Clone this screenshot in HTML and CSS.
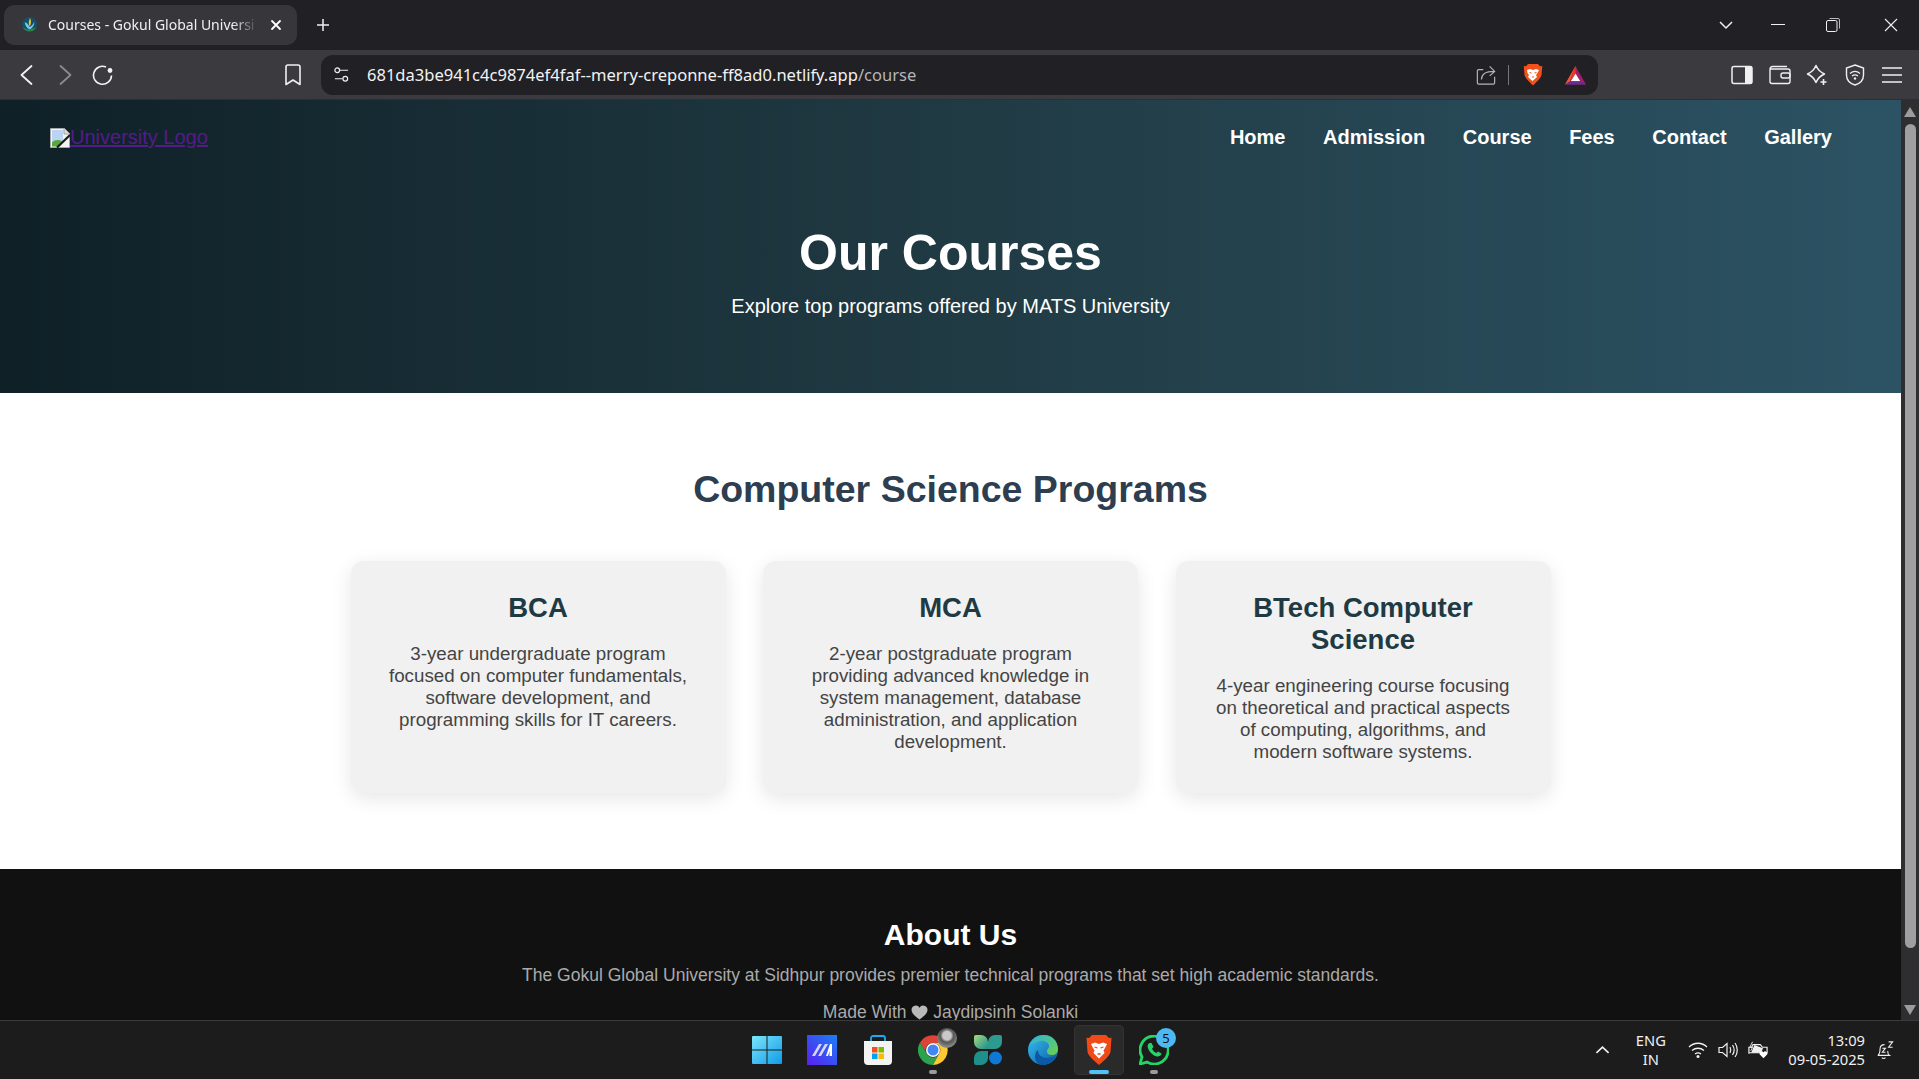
FILE: index.html
```html
<!DOCTYPE html>
<html lang="en">
<head>
  <meta charset="UTF-8">
  <meta name="viewport" content="width=device-width, initial-scale=1.0">
  <title>Courses - Gokul Global University</title>
  <link rel="stylesheet" href="styles.css">
</head>
<body>
  <!-- browser tab strip -->
  <div class="tabstrip">
    <div class="tab">
      <svg class="favicon" viewBox="0 0 16 16"><circle cx="8" cy="7" r="7" fill="#14506b"/><path d="M1.5 9.500c3 3 9 3 13 0-2 3.500-4 4-6.500 4s-4.500-.5-6.500-4z" fill="#2a8a4a"/><path d="M8.500 1c1.500 3 1 6-.5 8-1-3-1-5 .5-8z" fill="#e8c52e"/><path d="M3.500 5c2 .5 3.500 2 4.500 4.500 2-1 3.500-2.500 4.500-5 0 4-2 6.500-4.500 7C6 11 4 9 3.500 5z" fill="#7cc6e8"/></svg>
      <span class="tab-title">Courses - Gokul Global Universi</span>
      <svg class="tab-close" viewBox="0 0 12 12"><path d="M2 2l8 8M10 2l-8 8" stroke="#fff" stroke-width="1.8" stroke-linecap="round"/></svg>
    </div>
    <svg class="new-tab" viewBox="0 0 14 14"><path d="M7 1v12M1 7h12" stroke="#f0f0f0" stroke-width="1.5"/></svg>
    <div class="window-btns">
      <svg class="win-btn win-chev" viewBox="0 0 14 14"><path d="M1 4l6 6 6-6" fill="none" stroke="#f0f0f0" stroke-width="1.5"/></svg>
      <svg class="win-btn" viewBox="0 0 14 14"><path d="M0 6.500h14" stroke="#f0f0f0" stroke-width="1"/></svg>
      <svg class="win-btn" viewBox="0 0 14 14"><rect x=".5" y="2.500" width="10.500" height="11" rx="1.5" fill="none" stroke="#f0f0f0"/><path d="M3.500 .5h8.500a1.500 1.500 0 0 1 1.500 1.500v8.500" fill="none" stroke="#bbb"/></svg>
      <svg class="win-btn win-close" viewBox="0 0 14 14"><path d="M1 1l12 12M13 1L1 13" stroke="#f0f0f0" stroke-width="1.1"/></svg>
    </div>
  </div>

  <!-- browser toolbar -->
  <div class="toolbar">
    <svg class="tool-btn" viewBox="0 0 22 22"><path d="M15.500 2L5.500 11l10 9" fill="none" stroke="#f2f2f2" stroke-width="1.8" stroke-linecap="round" stroke-linejoin="round"/></svg>
    <svg class="tool-btn" viewBox="0 0 22 22"><path d="M6.500 2l10 9-10 9" fill="none" stroke="#8b8b8e" stroke-width="1.8" stroke-linecap="round" stroke-linejoin="round"/></svg>
    <svg class="tool-btn" viewBox="0 0 22 22"><path d="M19.500 11.500A9 9 0 1 1 14 3" fill="none" stroke="#f2f2f2" stroke-width="1.6"/><circle cx="18" cy="6.500" r="2.400" fill="#f2f2f2"/></svg>
    <svg class="bookmark" viewBox="0 0 16 22"><path d="M1 3a2 2 0 0 1 2-2h10a2 2 0 0 1 2 2v17.500L8 16l-7 4.500z" fill="none" stroke="#f0f0f0" stroke-width="1.6" stroke-linejoin="round"/></svg>
    <div class="urlbar">
      <svg class="site-settings" viewBox="0 0 18 18"><circle cx="4.500" cy="4.500" r="2.500" fill="none" stroke="#eee" stroke-width="1.3"/><path d="M7 4.500h9M2 13.500h8" stroke="#eee" stroke-width="1.3"/><circle cx="13" cy="13.500" r="2.500" fill="none" stroke="#eee" stroke-width="1.3"/></svg>
      <span class="url">681da3be941c4c9874ef4faf--merry-creponne-ff8ad0.netlify.app<span class="url-path">/course</span></span>
      <svg class="share" viewBox="0 0 22 22"><path d="M8 5H3a1.500 1.500 0 0 0-1.500 1.500v13A1.500 1.500 0 0 0 3 21h16a1.500 1.500 0 0 0 1.500-1.500V13" fill="none" stroke="#b5b5b8" stroke-width="1.3"/><path d="M6 16c0-6 4-9 14-9M15 1.500L20.500 7 15 12" fill="none" stroke="#b5b5b8" stroke-width="1.3"/></svg>
      <span class="url-sep"></span>
      <svg class="brave-small" viewBox="0 0 20 23"><path d="M5 1h10l2 2.200 2.300-.2L18.500 12c-.5 3-6 8-8.500 10.500C7.500 20 2 15 1.500 12L.7 3 3 3.200z" fill="#f1511b"/><path d="M4 7l3-1 3 1 3-1 3 1-1.500 3-1.500 2 1 2-4.500 4-4.500-4 1-2-1.500-2z" fill="#fff"/><path d="M6.500 9.500l2 .5M13.500 9.500l-2 .5M9 14h2" stroke="#f1511b" stroke-width="1"/></svg>
      <svg class="bat" viewBox="0 0 24 21"><path d="M12 1L1 20.500h22z" fill="#9e1f63"/><path d="M12 1L1 20.500l5-3.500z" fill="#f15a24"/><path d="M12 9l-5 8h10z" fill="#fff"/><path d="M1 20.500L7 17h10l6 3.500z" fill="#662d91"/><path d="M12 1L6.500 17 12 9z" fill="#ee3a24"/></svg>
    </div>
    <div class="tool-right">
      <svg class="tool-btn" viewBox="0 0 22 20"><rect x="1" y="1.500" width="20" height="17" rx="2" fill="none" stroke="#f0f0f0" stroke-width="1.5"/><rect x="14" y="1.500" width="7" height="17" fill="#f0f0f0"/></svg>
      <svg class="tool-btn" viewBox="0 0 22 20"><path d="M3.500 1.500H18M1 4a2.500 2.500 0 0 1 2.500-2.500M1 4v12.500a2 2 0 0 0 2 2h16a2 2 0 0 0 2-2V6a2 2 0 0 0-2-2H1" fill="none" stroke="#f0f0f0" stroke-width="1.4"/><rect x="12" y="8" width="9" height="5" rx="2" fill="none" stroke="#f0f0f0" stroke-width="1.4"/></svg>
      <svg class="tool-btn" viewBox="0 0 22 22"><path d="M10 1.500Q12.500 7.500 18.500 10 12.500 12.500 10 18.500 7.500 12.500 1.500 10 7.500 7.500 10 1.500z" fill="none" stroke="#f0f0f0" stroke-width="1.5" stroke-linejoin="round"/><path d="M17.500 15v6M14.500 18h6" stroke="#f0f0f0" stroke-width="1.6"/></svg>
      <svg class="tool-btn" viewBox="0 0 20 22"><path d="M10 1l8.500 3v7c0 5-3.500 8.500-8.500 10C5 19.500 1.500 16 1.500 11V4z" fill="none" stroke="#f0f0f0" stroke-width="1.4"/><path d="M5 9.500c3-2.500 7-2.500 10 0M7 12c2-1.500 4-1.500 6 0" fill="none" stroke="#f0f0f0" stroke-width="1.3"/><circle cx="10" cy="14.500" r="1.200" fill="#f0f0f0"/></svg>
      <svg class="tool-btn" viewBox="0 0 22 18"><path d="M1 2h20M1 9h20M1 16h20" stroke="#f0f0f0" stroke-width="1.5"/></svg>
    </div>
  </div>

  <div class="viewport">
    <div class="page">
      <header class="hero">
        <nav class="nav">
          <a class="logo" href="#">
            <svg class="broken-img" viewBox="0 0 20 20"><path d="M.5 .5h14l5 5v14H.5z" fill="#f4f4f4" stroke="#a6a6a6"/><path d="M14 .5v5.500h5.500" fill="#ddd" stroke="#a6a6a6"/><path d="M2 2h11v12H2z" fill="#bcd4f4"/><path d="M2 18.500v-4c3-3 7-3 10-1l-3 5z" fill="#58a83a"/><path d="M7 19.500L20 7" stroke="#1c1c1c" stroke-width="2.2"/></svg>University Logo
          </a>
          <ul class="nav-links">
            <li>Home</li>
            <li>Admission</li>
            <li>Course</li>
            <li>Fees</li>
            <li>Contact</li>
            <li>Gallery</li>
          </ul>
        </nav>
        <h1>Our Courses</h1>
        <p class="hero-sub">Explore top programs offered by MATS University</p>
      </header>

      <section class="programs">
        <h2>Computer Science Programs</h2>
        <div class="card-grid">
          <div class="card">
            <h3>BCA</h3>
            <p>3-year undergraduate program focused on computer fundamentals, software development, and programming skills for IT careers.</p>
          </div>
          <div class="card">
            <h3>MCA</h3>
            <p>2-year postgraduate program providing advanced knowledge in system management, database administration, and application development.</p>
          </div>
          <div class="card">
            <h3>BTech Computer Science</h3>
            <p>4-year engineering course focusing on theoretical and practical aspects of computing, algorithms, and modern software systems.</p>
          </div>
        </div>
      </section>

      <footer class="footer">
        <h3>About Us</h3>
        <p>The Gokul Global University at Sidhpur provides premier technical programs that set high academic standards.</p>
        <p class="made">Made With <svg class="heart" viewBox="0 0 18 16"><path d="M9 15.500C3 11 .5 8.500 .5 5A4.500 4.500 0 0 1 9 3a4.500 4.500 0 0 1 8.500 2c0 3.500-2.500 6-8.500 10.500z" fill="#b9b9b9"/></svg> Jaydipsinh Solanki</p>
      </footer>
    </div>

    <div class="scrollbar">
      <span class="arrow-up"></span>
      <span class="thumb"></span>
      <span class="arrow-down"></span>
    </div>
  </div>

  <!-- windows taskbar -->
  <div class="taskbar">
    <div class="task-left"></div>
    <div class="task-icons">
      <div class="task-icon">
        <svg viewBox="0 0 30 30"><defs><linearGradient id="w1" x1="0" y1="0" x2="1" y2="1"><stop offset="0" stop-color="#7ce5fa"/><stop offset="1" stop-color="#0f9be8"/></linearGradient></defs><path d="M1 1h13.500v13.500H0V2a1 1 0 0 1 1-1zM15.500 1H29a1 1 0 0 1 1 1v12.500H15.500zM0 15.500h14.500V29H1a1 1 0 0 1-1-1zM15.500 15.500H30V28a1 1 0 0 1-1 1H15.500z" fill="url(#w1)"/></svg>
      </div>
      <div class="task-icon">
        <svg viewBox="0 0 30 30"><defs><linearGradient id="m1" x1="0" y1="1" x2="1" y2="0"><stop offset="0" stop-color="#5a1ff0"/><stop offset="1" stop-color="#1a80f5"/></linearGradient></defs><rect width="30" height="30" fill="url(#m1)"/><path d="M5 21L12 9h3L8 21zM11 21l7-12h3l-7 12z" fill="#d8d4fa"/><path d="M19 21l4-12h2v12h-2.500v-5l-1.500 5z" fill="#fff"/></svg>
      </div>
      <div class="task-icon">
        <svg viewBox="0 0 30 30"><path d="M8 6V3a2 2 0 0 1 2-2h10a2 2 0 0 1 2 2v3" fill="none" stroke="#1eaaf1" stroke-width="1.8"/><path d="M1 6h28v20a4 4 0 0 1-4 4H5a4 4 0 0 1-4-4z" fill="#f3f3f3"/><rect x="9" y="12" width="5.500" height="5.500" fill="#f25022"/><rect x="15.500" y="12" width="5.500" height="5.500" fill="#7fba00"/><rect x="9" y="18.500" width="5.500" height="5.500" fill="#00a4ef"/><rect x="15.500" y="18.500" width="5.500" height="5.500" fill="#ffb900"/></svg>
      </div>
      <div class="task-icon has-dot">
        <svg viewBox="0 0 30 30"><path d="M15 8H28A15 15 0 0 0 2 7.500L8.900 19A7 7 0 0 1 15 8z" fill="#dd4437"/><path d="M2 7.500A15 15 0 0 0 15 30L21 19A7 7 0 0 1 9 19z" fill="#2ba24c"/><path d="M28 8A15 15 0 0 1 15 30L21 19A7 7 0 0 0 15 8z" fill="#fcc934"/><circle cx="15" cy="15" r="7" fill="#fff"/><circle cx="15" cy="15" r="5.500" fill="#4285f4"/></svg>
        <span class="avatar"></span>
      </div>
      <div class="task-icon">
        <svg viewBox="0 0 30 30"><defs><linearGradient id="c1" x1="0" y1="0" x2="1" y2="1"><stop offset="0" stop-color="#a6dc7c"/><stop offset="1" stop-color="#1a8d92"/></linearGradient></defs><path d="M1 2a2 2 0 0 1 2-2h5a7 7 0 0 1 7 7v7H8a7 7 0 0 1-7-7z" fill="url(#c1)"/><path d="M15 7a7 7 0 0 1 7-7h5a2 2 0 0 1 2 2v5a7 7 0 0 1-7 7h-7z" fill="#2c9a8e"/><path d="M1 23a7 7 0 0 1 7-7h7v7a7 7 0 0 1-7 7H3a2 2 0 0 1-2-2z" fill="#1f8f8b"/><circle cx="22.500" cy="23" r="6.500" fill="#0f78d4"/></svg>
      </div>
      <div class="task-icon">
        <svg viewBox="0 0 30 30"><defs><linearGradient id="e1" x1="0" y1="0" x2="1" y2="1"><stop offset="0" stop-color="#35c1f1"/><stop offset="1" stop-color="#0c59a4"/></linearGradient><linearGradient id="e2" x1="0" y1="0" x2="1" y2="1"><stop offset="0" stop-color="#2fb5d8"/><stop offset="1" stop-color="#6ed04a"/></linearGradient></defs><circle cx="15" cy="15" r="15" fill="url(#e1)"/><path d="M3 9C6 2 12 0 16 0c8 0 14 6 14 14 0 4-3 6-6 6-3 0-5-1-5-3 0-4 2-3 2-6 0-3-4-6-9-5-5 1-7 3-9 3z" fill="url(#e2)"/><path d="M10 15c0 5 4 8 9 8 3 0 7-1 9-3-2 6-8 10-13 10-4 0-8-3-8-8 0-3 1-6 3-7z" fill="#0c59a4"/></svg>
      </div>
      <div class="task-icon active">
        <svg viewBox="0 0 26 30"><path d="M6 0h14l3 3 2.500-.3L24.500 17c-.6 4-8 10-11.500 13C9.500 27 2.100 21 1.500 17L.5 2.700 3 3z" fill="#ef4a17"/><path d="M5 9l4-1.500L13 9l4-1.500L21 9l-2 4-1.500 2.500 1 2.500-5.500 5.500L7.500 18l1-2.500L7 13z" fill="#fff"/><path d="M8.500 12l3 1M17.500 12l-3 1M11.500 19h3" stroke="#ef4a17" stroke-width="1.3"/></svg>
      </div>
      <div class="task-icon has-dot">
        <svg viewBox="0 0 30 30"><path d="M15 1a14 14 0 0 0-12 21L1 29l7.200-1.900A14 14 0 1 0 15 1z" fill="none" stroke="#25d366" stroke-width="2.8"/><path d="M10.500 8c-2 1-2.500 3.500-1 6.500 1.500 3 4.500 6 8 7 2.500.5 4.500-1 5-3l-3.500-2-1.500 1.500c-2-.5-4-3-4.500-4.500L14.500 12 12.500 8z" fill="#25d366"/></svg>
        <span class="badge">5</span>
      </div>
    </div>
    <div class="tray">
      <svg class="tray-chev" viewBox="0 0 16 10"><path d="M1.500 8L8 2l6.500 6" fill="none" stroke="#f0f0f0" stroke-width="1.8"/></svg>
      <div class="lang">ENG<br>IN</div>
      <div class="tray-icons">
        <svg class="tray-icon" viewBox="0 0 20 18"><path d="M1 6c5-5 13-5 18 0M4 9.500c3.500-3 8.500-3 12 0M7 13c2-1.500 4-1.500 6 0" fill="none" stroke="#f0f0f0" stroke-width="1.3"/><circle cx="10" cy="15.500" r="1.500" fill="#f0f0f0"/></svg>
        <svg class="tray-icon" viewBox="0 0 20 18"><path d="M1 6.500h3.500L9 2.500v13l-4.500-4H1z" fill="none" stroke="#f0f0f0" stroke-width="1.2"/><path d="M12 6c1 2 1 4 0 6M14.500 4c2 3 2 7 0 10M17 2c3 4 3 10 0 14" fill="none" stroke="#f0f0f0" stroke-width="1.2"/></svg>
        <svg class="tray-icon" viewBox="0 0 22 18"><path d="M1 13V6h3l1.500-3h8L16 6h5v6H1z" fill="none" stroke="#f0f0f0" stroke-width="1.3"/><path d="M7 3.500L3.500 12h11l2-5z" fill="#f0f0f0"/><path d="M5 0L2 6h3L3 10" fill="none" stroke="#f0f0f0"/><path d="M17 18l-4-4a2.300 2.300 0 0 1 4-2.300 2.300 2.300 0 0 1 4 2.300z" fill="#fff"/></svg>
      </div>
      <div class="clock">13:09<br>09-05-2025</div>
      <svg class="bell" viewBox="0 0 20 20"><path d="M2 16c1.500-1 2.500-3 2.500-7 0-3 2-5 5-5M2 16h13c-1.500-1-2-2.500-2-5" fill="none" stroke="#f0f0f0" stroke-width="1.2"/><path d="M6.500 18.500c1 1.200 3 1.200 4 0" fill="none" stroke="#f0f0f0" stroke-width="1.2"/><path d="M7 8h3.500L7 12.500h3.500M14 1h4.500L14 7h4.500" fill="none" stroke="#f0f0f0" stroke-width="1.2"/></svg>
    </div>
  </div>
</body>
</html>
```
FILE: styles.css
```css
* {
  box-sizing: border-box;
}
html, body {
  margin: 0;
  height: 100%;
  overflow: hidden;
}
body {
  display: flex;
  flex-direction: column;
  font-family: "Liberation Sans", Arial, sans-serif;
  background: #202025;
}

/* tab strip */
.tabstrip {
  height: 50px;
  flex: none;
  display: flex;
  align-items: center;
  padding: 0 0 0 4px;
  background: #202025;
}
.tab {
  width: 293px;
  height: 40px;
  display: flex;
  align-items: center;
  padding: 0 15px 0 17px;
  background: #37363b;
  border-radius: 10px;
  color: #f0f0f0;
  font: 14px "Noto Sans", sans-serif;
}
.favicon {
  width: 17px;
  height: 17px;
  flex: none;
  margin-right: 10px;
}
.tab-title {
  flex: 1;
  overflow: hidden;
  padding-bottom: 2px;
  white-space: nowrap;
  -webkit-mask-image: linear-gradient(to right, #000 88%, transparent 100%);
  mask-image: linear-gradient(to right, #000 88%, transparent 100%);
}
.tab-close {
  width: 12px;
  height: 12px;
  flex: none;
  margin-left: 12px;
}
.new-tab {
  width: 14px;
  height: 14px;
  margin-left: 19px;
}
.window-btns {
  margin-left: auto;
  display: flex;
  align-items: center;
  padding-right: 21px;
  gap: 41px;
}
.win-btn {
  width: 14px;
  height: 14px;
}
.win-chev {
  margin-right: -3px;
}
.win-close {
  margin-left: 3px;
}

/* toolbar */
.toolbar {
  height: 50px;
  flex: none;
  display: flex;
  align-items: center;
  padding: 0 16px;
  gap: 16px;
  background: #3b3a3f;
  border-bottom: 1px solid #2e2e32;
}
.tool-btn {
  width: 22px;
  height: 22px;
  flex: none;
}
.bookmark {
  width: 16px;
  height: 22px;
  flex: none;
  margin-left: 155px;
}
.urlbar {
  width: 1277px;
  height: 40px;
  flex: none;
  display: flex;
  align-items: center;
  margin-left: 4px;
  padding: 0 11px 0 12px;
  background: #202025;
  border-radius: 12px;
}
.site-settings {
  width: 17px;
  height: 17px;
  flex: none;
  margin-right: 17px;
}
.url {
  flex: 1;
  color: #f2f2f2;
  font: 16.55px "Noto Sans", sans-serif;
  white-space: nowrap;
}
.url-path {
  color: #b5b5b8;
}
.share {
  width: 20px;
  height: 20px;
  flex: none;
}
.url-sep {
  width: 1px;
  height: 20px;
  margin: 0 14px 0 12px;
  background: #77777a;
}
.brave-small {
  width: 20px;
  height: 23px;
  flex: none;
}
.bat {
  width: 23px;
  height: 20px;
  flex: none;
  margin-left: 21px;
}
.tool-right {
  display: flex;
  align-items: center;
  gap: 15.5px;
  margin-left: 117px;
}

/* page area */
.viewport {
  flex: 1;
  min-height: 0;
  display: flex;
}
.page {
  flex: 1;
  min-width: 0;
  overflow: hidden;
  background: #fff;
}
.hero {
  height: 293px;
  text-align: center;
  color: #fff;
  background: linear-gradient(to right, #0f2027, #203a43, #2c5364);
}
.nav {
  display: flex;
  justify-content: space-between;
  align-items: center;
  padding: 26px 69px 0 50px;
}
.logo {
  display: flex;
  align-items: center;
  color: #551a8b;
  font-size: 20px;
  line-height: 23px;
  text-decoration: underline;
}
.broken-img {
  width: 20px;
  height: 20px;
  flex: none;
}
.nav-links {
  display: flex;
  gap: 37.5px;
  margin: 0;
  padding: 0;
  list-style: none;
  font-size: 20px;
  font-weight: 700;
}
.hero h1 {
  margin: 75px 0 0;
  font-size: 50px;
  line-height: 58px;
}
.hero-sub {
  margin: 13px 0 0;
  font-size: 20px;
  line-height: 23px;
}
.programs {
  height: 476px;
  padding-top: 75px;
  text-align: center;
}
.programs h2 {
  margin: 0;
  font-size: 37.5px;
  line-height: 43px;
  color: #2c3e50;
}
.card-grid {
  display: grid;
  grid-template-columns: repeat(3, 375px);
  gap: 37.5px;
  justify-content: center;
  margin-top: 50px;
}
.card {
  height: 232px;
  padding: 31px;
  background: #f1f1f1;
  border-radius: 12.5px;
  box-shadow: 0 5px 20px rgba(0, 0, 0, 0.1);
}
.card h3 {
  margin: 0 0 19px;
  font-size: 27.5px;
  line-height: 32px;
  color: #203a43;
}
.card p {
  margin: 0;
  font-size: 18.75px;
  line-height: 22px;
  color: #444;
}
.footer {
  height: 160px;
  padding-top: 48px;
  text-align: center;
  background: #111;
  color: #aaa;
}
.footer h3 {
  margin: 0;
  font-size: 30px;
  line-height: 35px;
  color: #fff;
}
.footer p {
  margin: 13px 0 0;
  font-size: 17.5px;
  line-height: 21px;
}
.footer .made {
  margin-top: 16px;
}
.heart {
  width: 17px;
  height: 15px;
  vertical-align: -2px;
}

/* scrollbar */
.scrollbar {
  width: 18px;
  flex: none;
  display: flex;
  flex-direction: column;
  align-items: center;
  background: #2e2e30;
  padding: 7px 0 5px;
}
.arrow-up, .arrow-down {
  width: 0;
  height: 0;
  flex: none;
  border-left: 6.5px solid transparent;
  border-right: 6.5px solid transparent;
}
.arrow-up {
  border-bottom: 10px solid #9c9c9c;
}
.arrow-down {
  border-top: 10px solid #9c9c9c;
  margin-top: auto;
}
.thumb {
  width: 11px;
  height: 824px;
  margin-top: 7px;
  background: #9f9f9f;
  border-radius: 6px;
}

/* taskbar */
.taskbar {
  height: 59px;
  flex: none;
  display: grid;
  grid-template-columns: 1fr auto 1fr;
  align-items: center;
  background: #1c1c1c;
  border-top: 1px solid #3a3a3a;
}
.task-icons {
  display: flex;
  align-items: center;
  gap: 5.3px;
  margin-left: 2px;
}
.task-icon {
  position: relative;
  width: 50px;
  height: 50px;
  display: flex;
  align-items: center;
  justify-content: center;
  border-radius: 5px;
}
.task-icon svg {
  width: 30px;
  height: 30px;
}
.task-icon.active {
  background: #2a2a2a;
  box-shadow: inset 0 0 0 1px #333;
}
.task-icon.active::after {
  content: "";
  position: absolute;
  left: 15px;
  bottom: 1px;
  width: 20px;
  height: 4px;
  border-radius: 2px;
  background: #4fc3f7;
}
.has-dot::after {
  content: "";
  position: absolute;
  left: 21px;
  bottom: 1px;
  width: 8px;
  height: 4px;
  border-radius: 2px;
  background: #9b9b9b;
}
.avatar {
  position: absolute;
  top: 3px;
  right: 1px;
  width: 20px;
  height: 20px;
  border-radius: 50%;
  background: radial-gradient(circle at 50% 38%, #c9c9c9 0 26%, #555 42%, #8a8a8a 72%);
}
.badge {
  position: absolute;
  top: 3px;
  right: 3px;
  width: 20px;
  height: 20px;
  border-radius: 50%;
  background: #4cb9f2;
  color: #111;
  font-size: 13px;
  line-height: 20px;
  text-align: center;
  font-family: "Noto Sans", sans-serif;
}
.tray {
  display: flex;
  align-items: center;
  justify-content: flex-end;
  padding-right: 25px;
  color: #f0f0f0;
  font: 14.7px/19px "Noto Sans", sans-serif;
}
.tray-chev {
  width: 15px;
  height: 10px;
  margin-right: 26px;
}
.lang {
  text-align: center;
}
.tray-icons {
  display: flex;
  align-items: center;
  gap: 10px;
  margin: 0 20px 0 22.5px;
}
.tray-icon {
  width: 20px;
  height: 18px;
}
.clock {
  text-align: right;
}
.bell {
  width: 18px;
  height: 18px;
  margin-left: 11px;
}
```
